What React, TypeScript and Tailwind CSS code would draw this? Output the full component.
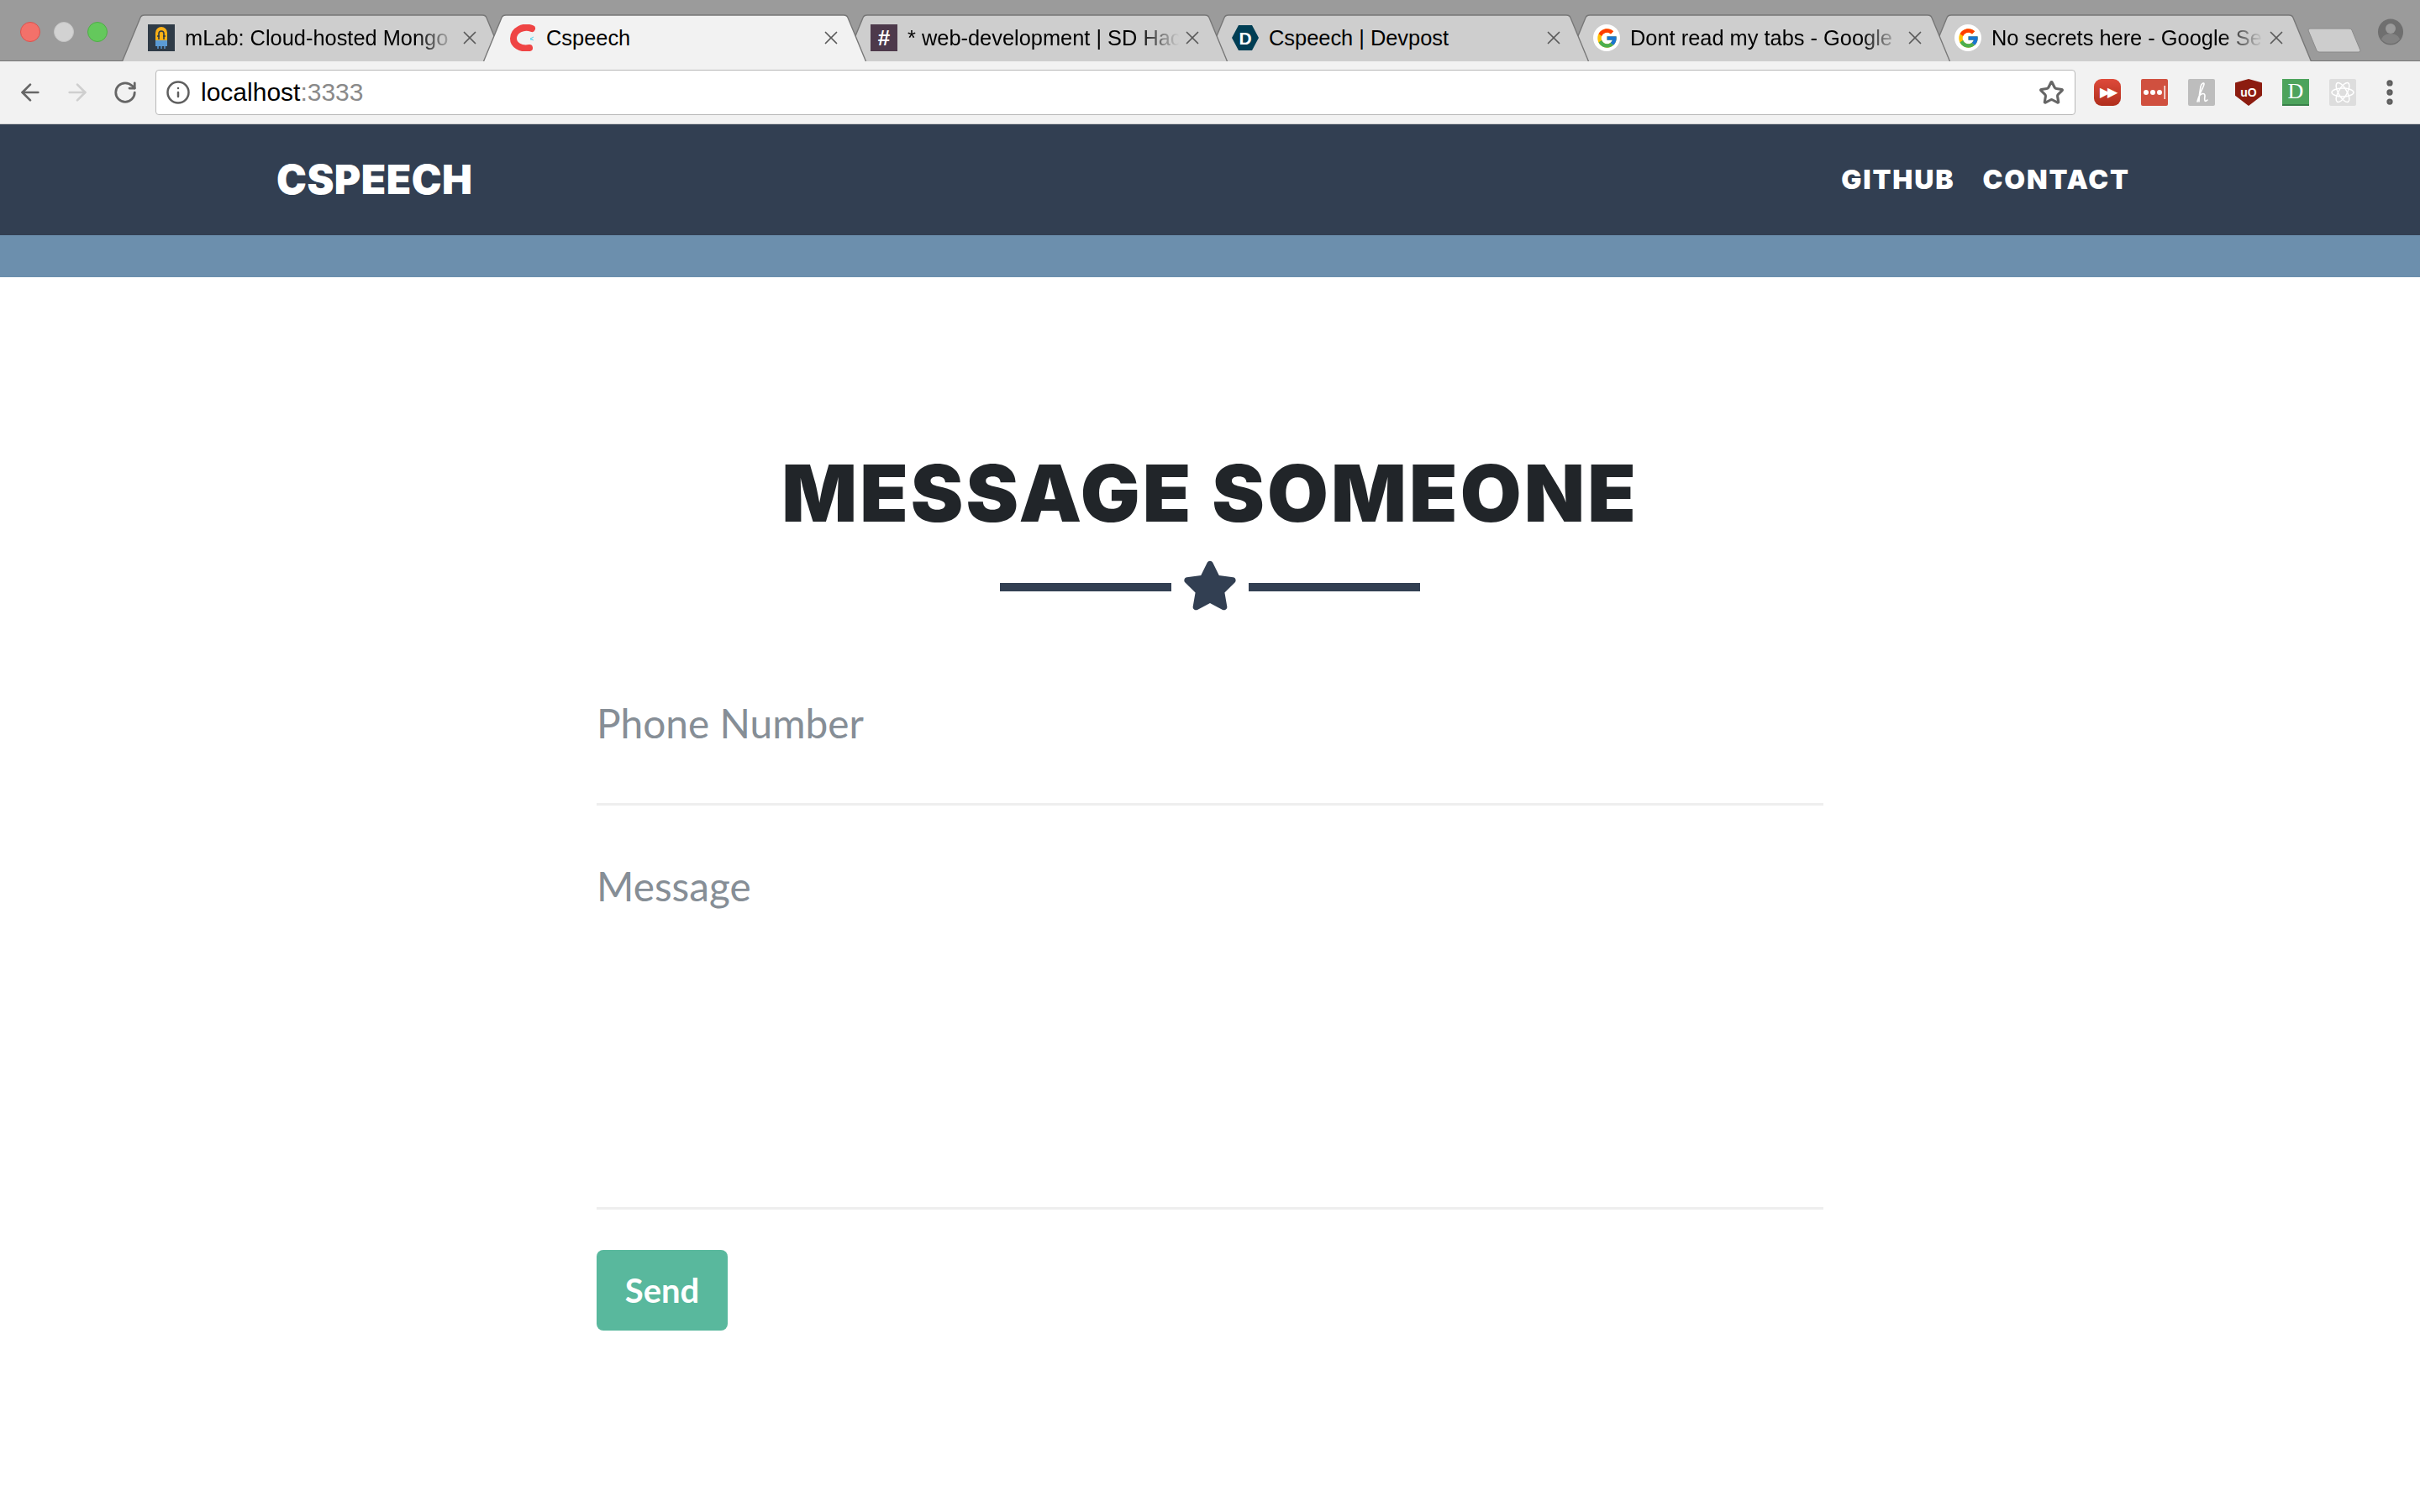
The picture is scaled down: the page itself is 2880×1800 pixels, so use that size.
import type React from "react"
import { ArrowLeft, ArrowRight, EllipsisVertical, Info, RotateCw, Star, X } from "lucide-react"
import { FaStar } from "react-icons/fa"
import { FcGoogle } from "react-icons/fc"

const MLabIcon = () => (
  <div className="w-8 h-8 bg-[#2f3b47] flex items-center justify-center shrink-0">
    <svg viewBox="0 0 32 32" className="w-8 h-8">
      <path d="M9 26V10a7 7 0 0 1 14 0v16z" fill="#fbb117" />
      <path d="M9 19h14v7H9z" fill="#5b9bd5" />
      <path d="M13 18v-7a3 3 0 0 1 6 0v7M11 14h3M18 14h3" fill="none" stroke="#2f3b47" strokeWidth="1.6" />
      <path d="M12 26v3M16 26v3M20 26v3" stroke="#5b9bd5" strokeWidth="1.5" />
    </svg>
  </div>
)

const CspeechIcon = () => (
  <svg viewBox="0 0 32 32" className="w-8 h-8 shrink-0">
    <path d="M27 5C17 1 5 7 5 17c0 7 8 13 19 11" fill="none" stroke="#ef4444" strokeWidth="8" strokeLinecap="round" />
    <path d="M29 15l-4 2 4 2M28 18h-3" fill="none" stroke="#5ad7f0" strokeWidth="1" />
  </svg>
)

const HashIcon = () => (
  <div className="w-8 h-8 bg-[#4d394b] flex items-center justify-center shrink-0 text-white font-bold text-[26px] leading-none font-['Liberation_Sans',sans-serif]">
    #
  </div>
)

const DevpostIcon = () => (
  <div className="relative w-8 h-8 shrink-0 flex items-center justify-center">
    <svg viewBox="0 0 32 32" className="absolute inset-0 w-8 h-8">
      <path d="M8 1h16l8 15-8 15H8L0 16z" fill="#003e54" />
    </svg>
    <span className="relative text-white font-bold text-[21px] leading-none font-['Liberation_Sans',sans-serif]">D</span>
  </div>
)

const GoogleIcon = () => (
  <div className="w-8 h-8 rounded-full bg-white flex items-center justify-center shrink-0">
    <FcGoogle className="w-[27px] h-[27px]" />
  </div>
)

const tabs = [
  { title: "mLab: Cloud-hosted Mongo", icon: <MLabIcon />, fade: true },
  { title: "Cspeech", icon: <CspeechIcon />, active: true },
  { title: "* web-development | SD Hac", icon: <HashIcon />, fade: true },
  { title: "Cspeech | Devpost", icon: <DevpostIcon /> },
  { title: "Dont read my tabs - Google", icon: <GoogleIcon />, fade: true },
  { title: "No secrets here - Google Se", icon: <GoogleIcon />, fade: true },
]

const Tab: React.FC<{ title: string; icon: React.ReactNode; active?: boolean; fade?: boolean; index: number }> = ({
  title,
  icon,
  active,
  fade,
  index,
}) => (
  <div
    className="relative w-[456px] h-14 -mr-[26px] shrink-0 flex items-center pl-[31px] pr-[30px]"
    style={{ zIndex: active ? 20 : 10 - index }}
  >
    <svg viewBox="0 0 456 56" className="absolute inset-0 w-[456px] h-14">
      <path
        d="M0.5 56 L22 4 Q23 1 27 1 H429 Q433 1 434 4 L455.5 56 Z"
        fill={active ? "#f2f2f2" : "#cecece"}
      />
      <path
        d="M0.5 56 L22 4 Q23 1 27 1 H429 Q433 1 434 4 L455.5 56"
        fill="none"
        stroke="#777777"
        strokeWidth="1.4"
      />
    </svg>
    <div className="relative flex items-center w-full">
      {icon}
      <span
        className={`ml-3 w-[323px] shrink-0 whitespace-nowrap text-[25.4px] leading-8 text-black font-['Liberation_Sans',Arial,sans-serif] ${
          fade ? "[mask-image:linear-gradient(to_right,black_85%,transparent_100%)]" : ""
        }`}
      >
        {title}
      </span>
      <X className="ml-[3px] w-[26px] h-[26px] text-[#5a5a5a] shrink-0" strokeWidth={1.6} />
    </div>
  </div>
)

const Extension: React.FC<{ className: string; children?: React.ReactNode }> = ({ className, children }) => (
  <div
    className={`w-8 h-8 flex items-center justify-center text-white leading-none font-['Liberation_Sans',sans-serif] ${className}`}
  >
    {children}
  </div>
)

const BrowserChrome = () => (
  <div>
    <div className="h-[73px] bg-[#9b9b9b] border-b border-[#777777] flex items-end relative">
      <div className="self-start mt-[26px] ml-6 flex gap-4 shrink-0">
        <div className="w-6 h-6 rounded-full bg-[#f3716a] border border-[#d9534f]" />
        <div className="w-6 h-6 rounded-full bg-[#d2d2d2] border border-[#c4c4c4]" />
        <div className="w-6 h-6 rounded-full bg-[#64c85c] border border-[#4fae47]" />
      </div>
      <div className="flex ml-[17px] -mb-px">
        {tabs.map((tab, index) => (
          <Tab key={index} index={index} {...tab} />
        ))}
      </div>
      <svg viewBox="0 0 64 30" className="self-start mt-[33px] ml-[21px] w-16 h-[30px] shrink-0">
        <path d="M1 3Q1 1 3 1H50Q52 1 53 3L63 27Q63 29 61 29H14Q12 29 11 27Z" fill="#cdcdcd" stroke="#8a8a8a" />
      </svg>
      <svg viewBox="0 0 32 32" className="self-start mt-[22px] ml-[19px] w-8 h-8 shrink-0">
        <ellipse cx="16" cy="16" rx="15" ry="15.5" fill="#6f6f6f" />
        <circle cx="16" cy="12" r="6" fill="#9b9b9b" />
        <path d="M5 25c2-5 6-7 11-7s9 2 11 7c-3 3-7 5-11 5s-8-2-11-5z" fill="#828282" />
      </svg>
    </div>
    <div className="h-[75px] bg-[#f2f2f2] border-b border-[#d0d0d0] flex items-center">
      <div className="w-[185px] shrink-0 flex items-center">
        <ArrowLeft className="ml-[20px] w-8 h-8 text-[#666666]" strokeWidth={2} />
        <ArrowRight className="ml-6 w-8 h-8 text-[#cfcfcf]" strokeWidth={2} />
        <RotateCw className="ml-[26px] w-[30px] h-[30px] text-[#666666]" strokeWidth={2.2} />
      </div>
      <div className="w-[2285px] h-[54px] bg-white border border-[#b8b8b8] rounded-[4px] flex items-center shrink-0">
        <Info className="ml-[11px] w-[30px] h-[30px] text-[#5f5f5f]" strokeWidth={2} />
        <span className="ml-[12px] text-[30px] leading-none text-black font-['Liberation_Sans',Arial,sans-serif]">
          localhost<span className="text-[#8a8a8a]">:3333</span>
        </span>
        <Star className="ml-auto mr-[12px] w-[31px] h-[31px] text-[#666666]" strokeWidth={2.4} />
      </div>
      <div className="flex items-center ml-[22px] gap-[24px]">
        <Extension className="bg-gradient-to-b from-[#de4a3a] to-[#b02e1c] rounded-[9px] text-[16px] tracking-[-3px]">
          ▶▶
        </Extension>
        <Extension className="bg-[#d0503f] rounded-[2px]">
          <svg viewBox="0 0 32 32" className="w-8 h-8" fill="#ffffff">
            <circle cx="6" cy="16" r="3" />
            <circle cx="14" cy="16" r="3" />
            <circle cx="22" cy="16" r="3" />
            <rect x="27.5" y="8" width="1.4" height="16" />
          </svg>
        </Extension>
        <Extension className="bg-[#bdbdbd] rounded-[2px]">
          <svg viewBox="0 0 32 32" className="w-8 h-8" fill="none" stroke="#ffffff" strokeWidth="1.6" strokeLinecap="round">
            <path d="M11 27C13 18 19 9 19 6c0-2-3-1-4 3-1 5-2 12-2 18M13 21c2-4 7-5 7-1 0 2-1 4 0 6 1 1 2 0 3-1" />
          </svg>
        </Extension>
        <Extension className="bg-[#8c1c10] [clip-path:polygon(50%_0,100%_14%,100%_62%,50%_100%,0_62%,0_14%)] text-[14px] font-bold">
          uO
        </Extension>
        <Extension className="bg-[#4da35c] border-b-2 border-[#39804a] text-[26px] font-['Liberation_Serif',serif]">
          D
        </Extension>
        <Extension className="bg-[#dddddd] rounded-[2px]">
          <svg viewBox="0 0 32 32" className="w-8 h-8" fill="none" stroke="#ffffff" strokeWidth="1.5">
            <ellipse cx="16" cy="16" rx="13" ry="5" />
            <ellipse cx="16" cy="16" rx="13" ry="5" transform="rotate(60 16 16)" />
            <ellipse cx="16" cy="16" rx="13" ry="5" transform="rotate(120 16 16)" />
          </svg>
        </Extension>
        <EllipsisVertical className="w-[38px] h-[38px] -mx-[3px] text-[#5f5f5f]" strokeWidth={2.6} />
      </div>
    </div>
  </div>
)

export default function App() {
  return (
    <div className="min-h-[1800px] bg-white font-['Lato',sans-serif]">
      <BrowserChrome />

      {/* Navbar */}
      <nav className="h-[132px] bg-[#323f52] flex items-center justify-between pl-[329px] pr-[345px] text-white font-['Inter',sans-serif] font-black">
        <a className="text-[48px] leading-none tracking-[0.5px]">CSPEECH</a>
        <div className="flex gap-[33px] text-[32px] leading-none tracking-[1.9px]">
          <a>GITHUB</a>
          <a>CONTACT</a>
        </div>
      </nav>
      <div className="h-[50px] bg-[#6c8fad]" />

      {/* Message form */}
      <section className="pt-[205px]">
        <h2 className="text-center text-[94px] leading-[104px] font-black tracking-[3.1px] text-[#212529] font-['Inter',sans-serif]">
          MESSAGE SOMEONE
        </h2>
        <div className="flex items-center justify-center gap-4 mt-[25px] text-[#323f52]">
          <div className="w-[204px] h-[10px] bg-[#323f52]" />
          <FaStar className="w-[66px] h-[66px] -mx-[3px] mb-1" />
          <div className="w-[204px] h-[10px] bg-[#323f52]" />
        </div>

        <form className="w-[1460px] mx-auto mt-[77px]">
          <input
            placeholder="Phone Number"
            className="block w-full h-[148px] pb-[46px] border-b-[3px] border-[#eeeeee] outline-none text-[47.8px] placeholder:text-[#868e96]"
          />
          <textarea
            placeholder="Message"
            className="block w-full h-[481px] pt-[67px] border-b-[3px] border-[#eeeeee] outline-none resize-none text-[47.8px] leading-[58px] placeholder:text-[#868e96]"
          />
          <button className="block mt-[48px] w-[156px] h-[96px] rounded-lg bg-[#59b89d] text-white font-bold text-[40px]">
            Send
          </button>
        </form>
      </section>
    </div>
  )
}
